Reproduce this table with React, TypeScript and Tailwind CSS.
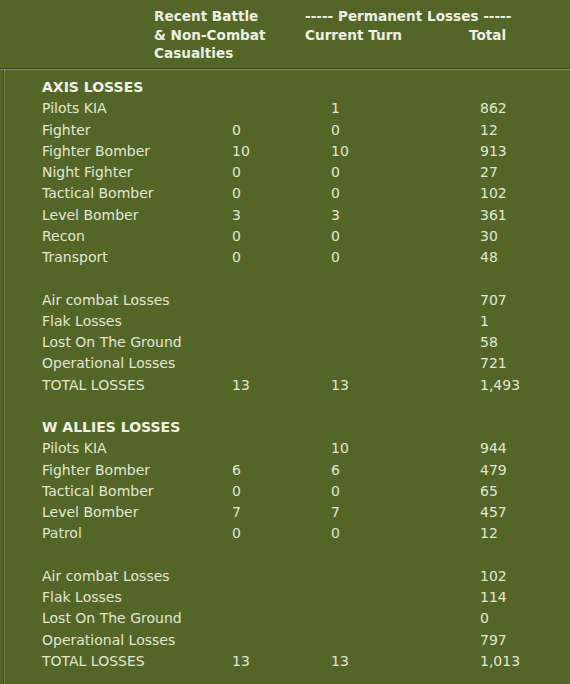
import React from 'react'

type Row = { label?: string; a?: string; b?: string; c?: string; head?: boolean }

const rows: Row[] = [
    { label: 'AXIS LOSSES', head: true },
    { label: 'Pilots KIA', b: '1', c: '862' },
    { label: 'Fighter', a: '0', b: '0', c: '12' },
    { label: 'Fighter Bomber', a: '10', b: '10', c: '913' },
    { label: 'Night Fighter', a: '0', b: '0', c: '27' },
    { label: 'Tactical Bomber', a: '0', b: '0', c: '102' },
    { label: 'Level Bomber', a: '3', b: '3', c: '361' },
    { label: 'Recon', a: '0', b: '0', c: '30' },
    { label: 'Transport', a: '0', b: '0', c: '48' },
    {},
    { label: 'Air combat Losses', c: '707' },
    { label: 'Flak Losses', c: '1' },
    { label: 'Lost On The Ground', c: '58' },
    { label: 'Operational Losses', c: '721' },
    { label: 'TOTAL LOSSES', a: '13', b: '13', c: '1,493' },
    {},
    { label: 'W ALLIES LOSSES', head: true },
    { label: 'Pilots KIA', b: '10', c: '944' },
    { label: 'Fighter Bomber', a: '6', b: '6', c: '479' },
    { label: 'Tactical Bomber', a: '0', b: '0', c: '65' },
    { label: 'Level Bomber', a: '7', b: '7', c: '457' },
    { label: 'Patrol', a: '0', b: '0', c: '12' },
    {},
    { label: 'Air combat Losses', c: '102' },
    { label: 'Flak Losses', c: '114' },
    { label: 'Lost On The Ground', c: '0' },
    { label: 'Operational Losses', c: '797' },
    { label: 'TOTAL LOSSES', a: '13', b: '13', c: '1,013' },
]

export default function App() {
    return (
        <div className="w-[570px] h-[684px] overflow-hidden bg-[#536628] text-[#e2e6d2] font-['DejaVu_Sans',sans-serif] text-[14px]">
            {/* header */}
            <div className="h-[68px] pt-[7px] grid grid-cols-[154px_151px_164px_1fr] font-bold text-[13.6px] text-[#eef0e2] leading-[18.5px]">
                <div />
                <div>
                    <div>Recent Battle</div>
                    <div>&amp; Non-Combat</div>
                    <div>Casualties</div>
                </div>
                <div className="col-span-2">
                    <div>----- Permanent Losses -----</div>
                    <div className="flex">
                        <span className="w-[164px]">Current Turn</span>
                        <span>Total</span>
                    </div>
                </div>
            </div>
            <div className="h-[1px] bg-[#3c4a1c]" />
            <div className="h-[1px] bg-[#7b8a56]" />

            <div className="flex h-full">
                <div className="w-[3px]" />
                <div className="w-[1px] bg-[#3c4a1c]" />
                <div className="w-[1px] bg-[#7b8a56]" />
                <div className="flex-1 pt-[7px]">
                    {rows.map((r, i) => (
                        <div key={i} className="h-[21.25px] leading-[21.25px] grid grid-cols-[37px_190px_99px_149px_1fr]">
                            <div />
                            <div className={r.head ? 'font-bold text-[#f0f2e4]' : ''}>{r.label}</div>
                            <div>{r.a}</div>
                            <div>{r.b}</div>
                            <div>{r.c}</div>
                        </div>
                    ))}
                </div>
            </div>
        </div>
    )
}
